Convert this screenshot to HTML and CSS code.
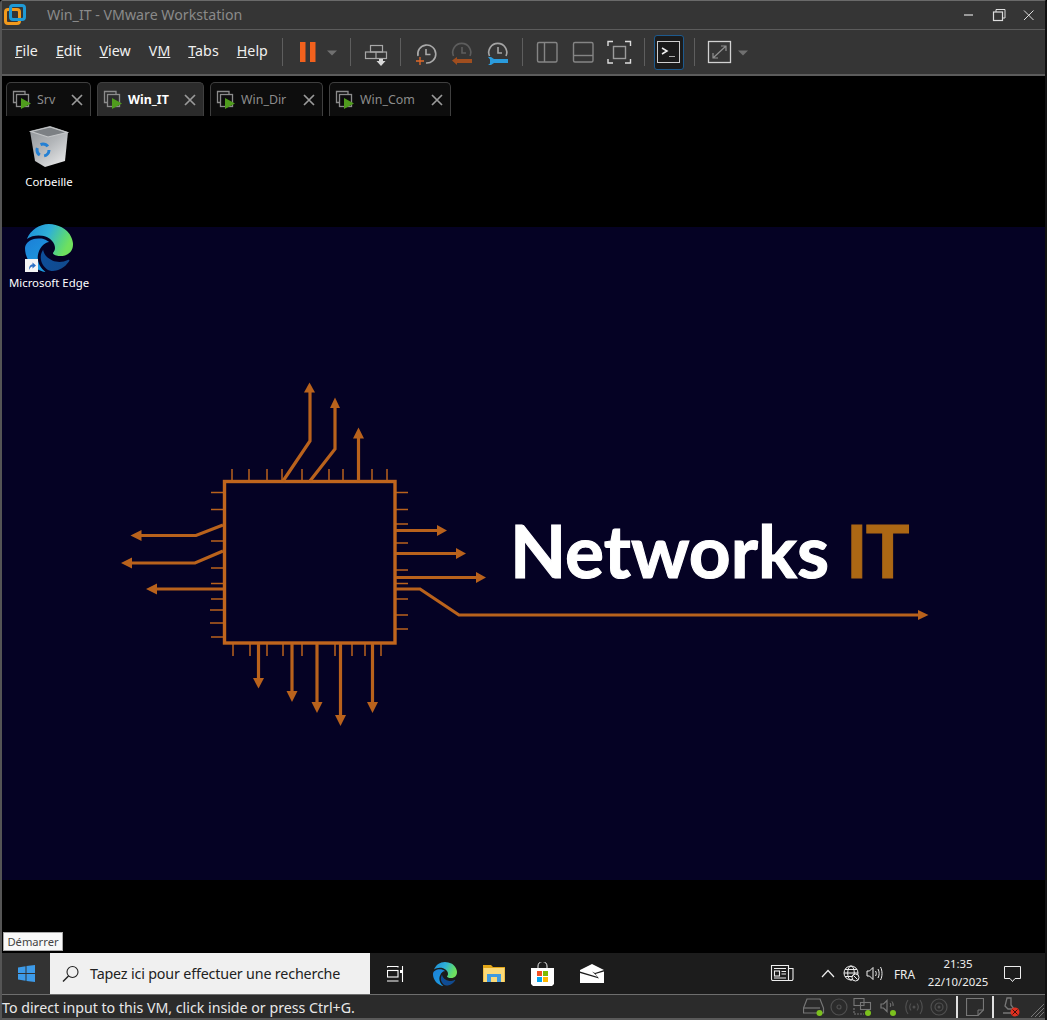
FILE: index.html
```html
<!DOCTYPE html>
<html lang="en">
<head>
<meta charset="utf-8">
<title>Win_IT - VMware Workstation</title>
<link rel="stylesheet" href="styles.css">
</head>
<body>
<svg class="defs" width="0" height="0" aria-hidden="true">
  <defs>
    <linearGradient id="edgeTop" x1="0" y1="0" x2="1" y2="0.35">
      <stop offset="0" stop-color="#1b8ad8"/><stop offset="0.5" stop-color="#2fb0d8"/><stop offset="0.85" stop-color="#58d67c"/><stop offset="1" stop-color="#6fe05e"/>
    </linearGradient>
    <linearGradient id="edgeLeft" x1="0" y1="0" x2="0.6" y2="1">
      <stop offset="0" stop-color="#1c7fd6"/><stop offset="1" stop-color="#1d9be0"/>
    </linearGradient>
    <linearGradient id="edgeBottom" x1="0" y1="0" x2="1" y2="0.5">
      <stop offset="0" stop-color="#0c4f9c"/><stop offset="1" stop-color="#114a8e"/>
    </linearGradient>
    <symbol id="edge" viewBox="0 0 24 24">
      <path fill="url(#edgeBottom)" d="M21.86 17.86q.14 0 .25.12.1.13.1.25t-.11.33l-.32.46-.43.53-.44.5q-.21.25-.38.42l-.22.23q-.58.53-1.34 1.04-.76.51-1.6.91-.86.4-1.74.64t-1.67.24q-.9 0-1.69-.28-.8-.28-1.48-.78-.68-.5-1.22-1.17-.53-.66-.92-1.44-.38-.77-.58-1.6-.2-.83-.2-1.67 0-1 .32-1.96.33-.97.87-1.8.14.95.55 1.77.41.82 1.02 1.5.6.68 1.38 1.21.78.54 1.64.9.86.36 1.77.56.92.2 1.8.2 1.12 0 2.18-.24 1.06-.23 2.06-.72l.2-.1.2-.05z"/>
      <path fill="url(#edgeLeft)" d="M6.36 16.59q0 1.1.27 2.15.27 1.06.78 2.03.51.96 1.24 1.77.74.82 1.66 1.4-1.47-.2-2.8-.74-1.33-.55-2.48-1.37-1.15-.83-2.08-1.9-.92-1.07-1.58-2.33T.36 14.94Q0 13.54 0 12.06q0-.81.32-1.49.31-.68.83-1.23.53-.55 1.2-.96.66-.4 1.35-.66.74-.27 1.5-.39.78-.12 1.55-.12.7 0 1.42.1.72.12 1.4.35.68.23 1.32.57.63.35 1.16.83-.35 0-.7.07-.33.07-.65.23v-.02q-.63.28-1.2.74-.57.46-1.05 1.04-.48.58-.87 1.26-.38.67-.65 1.39-.27.71-.42 1.44-.15.72-.15 1.38z"/>
      <path fill="url(#edgeTop)" d="M11.96.06q1.7 0 3.33.39 1.63.38 3.07 1.15 1.43.77 2.62 1.93 1.18 1.16 1.98 2.7.49.94.76 1.96.28 1 .28 2.08 0 .89-.23 1.7-.24.8-.69 1.48-.45.68-1.1 1.22-.64.53-1.45.88-.54.24-1.11.36-.58.13-1.16.13-.42 0-.97-.03-.54-.03-1.1-.12-.55-.09-1.05-.28-.5-.19-.84-.5-.12-.09-.23-.24-.1-.16-.1-.33 0-.15.16-.35.16-.2.35-.5.2-.28.36-.68.16-.4.16-.95 0-1.06-.4-1.96-.4-.91-1.06-1.64-.66-.74-1.52-1.28-.86-.55-1.79-.89-.84-.3-1.72-.44-.87-.14-1.76-.14-1.55 0-3.06.45T.94 7.55q.71-1.74 1.81-3.13 1.1-1.38 2.52-2.35Q6.68 1.1 8.37.58q1.7-.52 3.58-.52Z"/>
    </symbol>
    <symbol id="vmtab" viewBox="0 0 20 20">
      <path d="M4.5 12.5H1.5V1.5H13V4" fill="none" stroke="#8c8c8c" stroke-width="1.3"/>
      <rect x="4.5" y="4.5" width="12" height="12" fill="none" stroke="#8c8c8c" stroke-width="1.3"/>
      <path d="M9 8V19L19 13.5Z" fill="#4f9c1d"/>
    </symbol>
    <symbol id="xmark" viewBox="0 0 12 12">
      <path d="M1 1L11 11M11 1L1 11" stroke="#9a9a9a" stroke-width="1.7" fill="none"/>
    </symbol>
  </defs>
</svg>

<div class="window">
  <header class="titlebar">
    <svg class="app-logo" width="22" height="22" viewBox="0 0 22 22">
      <rect x="1.5" y="5.5" width="14" height="14" rx="2.5" fill="none" stroke="#f39a1c" stroke-width="3"/>
      <rect x="6.5" y="1.5" width="14" height="14" rx="2.5" fill="none" stroke="#1f9ad6" stroke-width="3"/>
    </svg>
    <span class="title">Win_IT - VMware Workstation</span>
    <div class="win-controls">
      <svg width="30" height="22" viewBox="0 0 30 22"><path d="M10 11H19" stroke="#ddd" stroke-width="1.2"/></svg>
      <svg width="30" height="22" viewBox="0 0 30 22"><path d="M12 8V5.500H21V14H18.500" fill="none" stroke="#ddd" stroke-width="1"/><rect x="9.500" y="8" width="9" height="8.500" fill="none" stroke="#ddd" stroke-width="1.200"/></svg>
      <svg width="30" height="22" viewBox="0 0 30 22"><path d="M10 6.500L19.500 16M19.500 6.500L10 16" stroke="#ddd" stroke-width="1"/></svg>
    </div>
  </header>

  <div class="toolbar">
    <nav class="menus">
      <span><u>F</u>ile</span><span><u>E</u>dit</span><span><u>V</u>iew</span><span>V<u>M</u></span><span><u>T</u>abs</span><span><u>H</u>elp</span>
    </nav>
    <i class="sep"></i>
    <svg class="tool" viewBox="0 0 36 36"><rect x="11" y="2" width="5.500" height="20" fill="#f2611d"/><rect x="21" y="2" width="5.500" height="20" fill="#f2611d"/></svg>
    <svg class="drop" viewBox="0 0 14 36"><path d="M2 10.500H12L7 15.500Z" fill="#707070"/></svg>
    <i class="sep sep-wide"></i>
    <svg class="tool" viewBox="0 0 36 36"><g fill="none" stroke="#a8a8a8" stroke-width="1.200"><rect x="13.500" y="5.500" width="12" height="6.500"/><rect x="8.500" y="12" width="21" height="6.500"/><path d="M19 12V18.500"/></g><path d="M22 19H26V21H28.500L24 26L19.500 21H22Z" fill="#d8d8d8"/></svg>
    <i class="sep"></i>
    <svg class="tool" viewBox="0 0 36 36"><g fill="none" stroke="#aaa" stroke-width="1.600"><path d="M11 16A9 9 0 1 1 19 23"/><path d="M19 9V14.500H23.500"/></g><path d="M13 17V25M9 21H17" stroke="#e0692a" stroke-width="1.300"/></svg>
    <svg class="tool" viewBox="0 0 36 36"><g fill="none" stroke="#5d5d5d" stroke-width="1.600"><path d="M10.500 16A9 9 0 1 1 27 16"/><path d="M19 7V13H23"/></g><path d="M9 20.500L14 17V19H29V23H14V25Z" fill="#a04e1f"/></svg>
    <svg class="tool" viewBox="0 0 36 36"><g fill="none" stroke="#a5a5a5" stroke-width="1.600"><path d="M10.500 16A9 9 0 1 1 27 16"/><path d="M19 7V13H23"/></g><path d="M9 17H12L15 19H29V23H15L12 25H9L11 23.500V19.500Z" fill="#2a9bdc"/></svg>
    <i class="sep"></i>
    <svg class="tool" viewBox="0 0 36 36"><g fill="none" stroke="#858585" stroke-width="1.400"><rect x="8.500" y="2.500" width="19.500" height="19.500" rx="1.500"/><path d="M15.500 2.500V22"/></g></svg>
    <svg class="tool" viewBox="0 0 36 36"><g fill="none" stroke="#858585" stroke-width="1.400"><rect x="8.500" y="2.500" width="19.500" height="19.500" rx="1.500"/><path d="M8.500 15.500H28"/></g></svg>
    <svg class="tool" viewBox="0 0 36 36"><path d="M7 6V1.500H12M24 1.500H29.500V6M29.500 19V23H24M12 23H7V19" fill="none" stroke="#ddd" stroke-width="1.400"/><rect x="12.500" y="6.500" width="12" height="12" fill="none" stroke="#9c9c9c" stroke-width="1.400"/></svg>
    <i class="sep"></i>
    <div class="tool-active">
      <svg width="23" height="22" viewBox="0 0 23 22"><rect x="0.500" y="0.500" width="22" height="21" fill="none" stroke="#cfcfcf"/><path d="M5 7L10 10L5 13" fill="none" stroke="#eee" stroke-width="1.500"/><path d="M12 15.500H18" stroke="#aaa"/></svg>
    </div>
    <i class="sep"></i>
    <svg class="tool" viewBox="0 0 36 36"><rect x="7.500" y="1.500" width="22" height="21" fill="none" stroke="#d2d2d2" stroke-width="1.300"/><path d="M12 18L25 6M20 6H25V11M12 13V18H17" fill="none" stroke="#8f8f8f" stroke-width="1.200"/></svg>
    <svg class="drop" viewBox="0 0 14 36"><path d="M1 10.500H11L6 15.500Z" fill="#707070"/></svg>
  </div>

  <div class="tabs">
    <div class="tab"><svg class="tab-icon"><use href="#vmtab"/></svg><span>Srv</span><svg class="tab-x"><use href="#xmark"/></svg></div>
    <div class="tab tab-on"><svg class="tab-icon"><use href="#vmtab"/></svg><span>Win_IT</span><svg class="tab-x"><use href="#xmark"/></svg></div>
    <div class="tab"><svg class="tab-icon"><use href="#vmtab"/></svg><span>Win_Dir</span><svg class="tab-x"><use href="#xmark"/></svg></div>
    <div class="tab"><svg class="tab-icon"><use href="#vmtab"/></svg><span>Win_Com</span><svg class="tab-x"><use href="#xmark"/></svg></div>
  </div>

  <main class="guest">
    <div class="wall">
      <svg class="logo" viewBox="2 227 1043 653" width="1043" height="653">
        <g class="thin">
          <path d="M232 469V481M249 469V481M267 469V481M282 469V481M302 469V481M329 469V481M343 469V481M372 469V481M387 469V481"/>
          <path d="M233 644V656M250 644V656M267 644V656M283 644V656M302 644V656M335 644V656M352 644V656M365 644V656M381 644V656"/>
          <path d="M211 492.500H224M211 509.500H224M211 541H224M211 568H224M211 583.500H224M211 599H224M210 610H224M210 623H224M211 637H224"/>
          <path d="M396 492.500H408M396 509.500H408M396 524H408M396 543H408M396 570H408M396 583.500H408M396 599H408M396 615H408M396 629H408"/>
        </g>
        <rect class="chip" x="224.500" y="481.500" width="170.500" height="161.500"/>
        <g class="trace">
          <path d="M283 481L310 441V392"/>
          <path d="M310 481L335 449V408"/>
          <path d="M358.500 481V438"/>
          <path d="M223 525L196 535.500H141"/>
          <path d="M223 551L195 563H131"/>
          <path d="M223 589H156"/>
          <path d="M396 530.500H437"/>
          <path d="M396 553.500H456"/>
          <path d="M396 577.500H476"/>
          <path d="M396 589H420L459 615H918"/>
          <path d="M258.500 644V679"/>
          <path d="M292 644V692"/>
          <path d="M317 644V703"/>
          <path d="M340.500 644V716"/>
          <path d="M372.500 644V703"/>
        </g>
        <g class="head">
          <path d="M309.500 382.500L315 392.500H304Z"/>
          <path d="M335 397.500L340 408H330Z"/>
          <path d="M358.500 427.500L364 438.500H353Z"/>
          <path d="M130.500 535.500L141.500 530V541Z"/>
          <path d="M121 563L132 557.500V568.500Z"/>
          <path d="M146 589L157 583.500V594.500Z"/>
          <path d="M447 530.500L437 525V536Z"/>
          <path d="M466 553.500L456 548V559Z"/>
          <path d="M486 577.500L476 572V583Z"/>
          <path d="M928.500 615L918 610V620Z"/>
          <path d="M258.500 688.500L253 678H264Z"/>
          <path d="M292 702L286.500 691H297.500Z"/>
          <path d="M317 713L311.500 702H322.500Z"/>
          <path d="M340.500 726L335 715H346Z"/>
          <path d="M372.500 713L367 702H378Z"/>
        </g>
        <text class="brand" x="510" y="578">Networks <tspan class="brand-it" x="846">IT</tspan></text>
      </svg>
    </div>

    <div class="desk-icon desk-bin">
      <svg width="40" height="44" viewBox="0 0 40 44">
        <defs><linearGradient id="binG" x1="0" y1="0" x2="0.7" y2="1"><stop offset="0" stop-color="#8e9296"/><stop offset="0.55" stop-color="#b4b7ba"/><stop offset="1" stop-color="#e2e3e4"/></linearGradient></defs>
        <path d="M1 7L21 2L39 8L36 37L16 43L6 37Z" fill="url(#binG)"/>
        <path d="M2 7.500L21 3L38 8.500L19 13Z" fill="#7c8084" stroke="#c4c6c8" stroke-width="1.200"/>
        <circle cx="14" cy="26" r="6" fill="none" stroke="#2480d4" stroke-width="3" stroke-dasharray="8 4.500"/>
      </svg>
      <span>Corbeille</span>
    </div>
    <div class="desk-icon desk-edge">
      <div class="edge-wrap">
        <svg width="48" height="48"><use href="#edge"/></svg>
        <svg class="shortcut" width="13" height="13" viewBox="0 0 13 13"><rect width="13" height="13" fill="#f4f4f4"/><path d="M4 11C4 7 5.500 5.500 7.500 5.500V3.500L11 6.500L7.500 9.500V7.500C6 7.500 5 9 4 11Z" fill="#2a6fc4"/></svg>
      </div>
      <span>Microsoft Edge</span>
    </div>

    <div class="tooltip">Démarrer</div>

    <div class="taskbar">
      <div class="start">
        <svg width="17" height="17" viewBox="0 0 17 17"><path d="M0 2.500L7.500 1.300V8H0ZM8.500 1.100L17 0V8H8.500ZM0 9H7.500V15.700L0 14.500ZM8.500 9H17V17L8.500 15.900Z" fill="#3d9be9"/></svg>
      </div>
      <div class="search">
        <svg width="18" height="18" viewBox="0 0 18 18"><circle cx="10.500" cy="7" r="5.500" fill="none" stroke="#222" stroke-width="1.100"/><path d="M6.500 11L1 16.500" stroke="#222" stroke-width="1.500"/></svg>
        <span>Tapez ici pour effectuer une recherche</span>
      </div>
      <div class="task-apps">
        <div class="app"><svg width="17" height="16" viewBox="0 0 17 16"><g fill="none" stroke="#fff" stroke-width="1.100"><rect x="0.500" y="4.500" width="10.500" height="6.500"/><path d="M0.500 1.500V0.500H11V1.500M0.500 14.500V15H11V14.500M15.500 0V16"/></g><rect x="13" y="4" width="3" height="3" fill="#fff"/></svg></div>
        <div class="app"><svg width="24" height="24"><use href="#edge"/></svg></div>
        <div class="app"><svg width="22" height="19" viewBox="0 0 22 19"><path d="M0 1H8L10 3H22V18H0Z" fill="#e2a516"/><rect x="0.500" y="4" width="21" height="14" fill="#fbd978"/><path d="M4 10H18V18H14V13H8V18H4Z" fill="#3e9ae0"/></svg></div>
        <div class="app"><svg width="23" height="24" viewBox="0 0 23 24"><path d="M7 7V4A4.500 4.500 0 0 1 16 4V7" fill="none" stroke="#eee" stroke-width="1"/><path d="M0 6H23V22L21 24H2L0 22Z" fill="#fff"/><rect x="6" y="9" width="5" height="5" fill="#f25022"/><rect x="12" y="9" width="5" height="5" fill="#7fba00"/><rect x="6" y="15" width="5" height="5" fill="#00a4ef"/><rect x="12" y="15" width="5" height="5" fill="#ffb900"/></svg></div>
        <div class="app"><svg width="24" height="19" viewBox="0 0 24 19"><path d="M0 6L12 0L24 6L15 9L12 7.500L18 13L0 7.500Z" fill="#fff"/><path d="M0 9L19 14.500L15.500 10L24 7.500V19H0Z" fill="#fff"/></svg></div>
      </div>
      <div class="tray">
        <svg class="tray-news" width="24" height="17" viewBox="0 0 24 17"><g fill="none" stroke="#eee" stroke-width="1.100"><path d="M1.500 0.500H18.500V15.500H3A1.500 1.500 0 0 1 1.500 14Z"/><path d="M18.500 3.500H23V14A1.500 1.500 0 0 1 21.500 15.500H18.500"/><rect x="4.500" y="6" width="5" height="5"/></g><path d="M4 3.500H16M11.500 6.500H16M11.500 9H16M4 13H16" stroke="#eee"/></svg>
        <svg class="tray-chev" width="14" height="9" viewBox="0 0 14 9"><path d="M1 8L7 1.500L13 8" fill="none" stroke="#eee" stroke-width="1.200"/></svg>
        <svg class="tray-globe" width="17" height="17" viewBox="0 0 17 17"><g fill="none" stroke="#eee"><circle cx="8" cy="8" r="7"/><ellipse cx="8" cy="8" rx="3.300" ry="7"/><path d="M1 8H15M2 4.500H14M2 11.500H14"/></g><circle cx="12.500" cy="12.500" r="3.500" fill="#1c1c1c" stroke="#eee"/><path d="M10.500 10.500L14.500 14.500" stroke="#eee"/></svg>
        <svg class="tray-vol" width="17" height="15" viewBox="0 0 17 15"><path d="M1 5H3.500L7 1.500V13.500L3.500 10H1Z" fill="none" stroke="#eee"/><path d="M9.500 5C10.500 6.500 10.500 8.500 9.500 10M12 3C13.500 5.500 13.500 9.500 12 12M14.500 1C16.500 4.500 16.500 10.500 14.500 14" fill="none" stroke="#eee"/></svg>
        <span class="tray-lang">FRA</span>
        <div class="clock"><span>21:35</span><span>22/10/2025</span></div>
        <svg class="tray-note" width="17" height="16" viewBox="0 0 17 16"><path d="M0.500 0.500H16.500V12.500H11L8.500 15.500L6 12.500H0.500Z" fill="none" stroke="#eee"/></svg>
      </div>
    </div>
  </main>

  <footer class="status">
    <span class="hint">To direct input to this VM, click inside or press Ctrl+G.</span>
    <div class="devices">
      <span class="dev"><svg width="22" height="18" viewBox="0 0 22 18"><path d="M0.500 15V10L4 1H17L20.500 10V15Z" fill="none" stroke="#777" stroke-width="1.200"/><path d="M1 10H17" stroke="#777" stroke-width="1.200"/><circle cx="16.500" cy="15" r="3" fill="#7cc11e"/></svg></span>
      <span class="dev"><svg width="18" height="18" viewBox="0 0 18 18"><g fill="none" stroke="#4f4f4f" stroke-width="1.200"><circle cx="9" cy="9" r="8"/><circle cx="9" cy="9" r="2"/></g></svg></span>
      <span class="dev"><svg width="22" height="18" viewBox="0 0 22 18"><g fill="none" stroke="#777" stroke-width="1.100"><rect x="1" y="0.500" width="10" height="7"/><rect x="7.500" y="4.500" width="10" height="7"/><path d="M1 10V16H11" stroke-dasharray="2 1"/></g><circle cx="15" cy="15" r="3" fill="#7cc11e"/></svg></span>
      <span class="dev"><svg width="18" height="18" viewBox="0 0 18 18"><path d="M1 6H3.500L7 2.500V13.500L3.500 10H1Z" fill="none" stroke="#777" stroke-width="1.200"/><path d="M10 5C11 6 11 8 10 9M12 3.500C13.200 5 13.200 7 13 8" fill="none" stroke="#777"/><circle cx="13" cy="15" r="3" fill="#7cc11e"/></svg></span>
      <span class="dev"><svg width="20" height="16" viewBox="0 0 20 16"><g fill="none" stroke="#4f4f4f" stroke-width="1.200"><path d="M4 1C1 5 1 11 4 15M16 1C19 5 19 11 16 15M7 4.500C5.500 6.500 5.500 9.500 7 11.500M13 4.500C14.500 6.500 14.500 9.500 13 11.500"/></g><circle cx="10" cy="8" r="1.500" fill="#4f4f4f"/></svg></span>
      <span class="dev"><svg width="18" height="18" viewBox="0 0 18 18"><g fill="none" stroke="#4f4f4f" stroke-width="1.200"><circle cx="9" cy="9" r="8"/><circle cx="9" cy="9" r="4"/></g><circle cx="9" cy="9" r="1.500" fill="#4f4f4f"/></svg></span>
      <i class="dev-sep"></i>
      <span class="dev dev-wide"><svg width="18" height="18" viewBox="0 0 18 18"><path d="M0.500 0.500H17.500V12L12 17.500H0.500Z" fill="none" stroke="#777" stroke-width="1.200"/><path d="M17.500 12H12V17.500" fill="none" stroke="#777"/></svg></span>
      <i class="dev-sep"></i>
      <span class="dev dev-wide"><svg width="18" height="20" viewBox="0 0 18 20"><path d="M5 1H9V8L12 12H6L3 9Z M1 16H11" fill="none" stroke="#777" stroke-width="1.300"/><circle cx="13" cy="15" r="4.500" fill="#e03020"/><path d="M10.500 12.500L15.500 17.500M15.500 12.500L10.500 17.500" stroke="#3a0d08"/></svg></span>
    </div>
    <svg class="grip" width="15" height="15" viewBox="0 0 15 15"><path d="M1 14L14 1M5 14L14 5M9 14L14 9" stroke="#777"/></svg>
  </footer>
</div>
</body>
</html>
```

FILE: styles.css
```css
* { box-sizing: border-box; }
html, body { margin: 0; padding: 0; background: #000; }
body { font-family: "Noto Sans", "Open Sans", sans-serif; overflow: hidden; }
.defs { position: absolute; }
svg { display: block; flex: none; }

.window {
  width: 1047px;
  height: 1020px;
  display: flex;
  flex-direction: column;
  background: #353535;
  border-top: 1px solid #6a6a6a;
  border-left: 2px solid #555;
  border-right: 2px solid #111;
  border-radius: 3px 3px 0 0;
}

/* title bar */
.titlebar {
  height: 29px;
  flex: none;
  display: flex;
  align-items: center;
  background: #353535;
  border-bottom: 1px solid #5c5c5c;
  padding-left: 2px;
}
.app-logo { margin-top: -1px; }
.title { margin-left: 21px; font-size: 14.2px; color: #8a8a8a; margin-top: -1px; }
.win-controls { margin-left: auto; display: flex; gap: 0; padding-right: 1px; }

/* toolbar */
.toolbar {
  height: 46px;
  flex: none;
  display: flex;
  align-items: center;
  background: #353535;
  border-bottom: 2px solid #5c5c5c;
}
.menus {
  display: flex;
  gap: 18px;
  margin-left: 13px;
  margin-bottom: 4px;
  font-size: 14.2px;
  color: #f0f0f0;
  letter-spacing: 0.05px;
}
.sep { width: 1px; height: 28px; background: #5e5e5e; margin: 0 6px 0 7px; flex: none; }
.menus + .sep { margin-left: 14px; }
.sep-wide { margin-left: 11px; }
.tool { width: 36px; height: 36px; flex: none; margin-top: 12px; }
.drop { width: 14px; height: 36px; flex: none; margin-top: 12px; }
.tool-active {
  width: 30px;
  height: 35px;
  margin: 0 3px;
  display: flex;
  align-items: center;
  justify-content: center;
  background: #1b1b1b;
  border: 1px solid #1d5a8e;
  border-radius: 3px;
}

/* tabs */
.tabs {
  height: 40px;
  flex: none;
  display: grid;
  grid-template-columns: 85px 107px 113px 122px;
  gap: 6px;
  padding: 6px 0 0 4px;
  background: #000;
}
.tab {
  display: flex;
  align-items: center;
  padding: 0 7px;
  border: 1px solid #3f3f3f;
  border-bottom: 0;
  border-radius: 5px 5px 0 0;
  background: #0d0d0d;
  font-size: 12.4px;
  color: #8c8c8c;
}
.tab-on { background: #2b2b2b; color: #fff; font-weight: 700; }
.tab-icon { width: 20px; height: 20px; margin-left: -2px; margin-right: 5px; }
.tab-x { width: 12px; height: 12px; margin-left: auto; }

/* guest desktop */
.guest {
  position: relative;
  flex: 1;
  display: flex;
  flex-direction: column;
  background: #000;
  padding-top: 111px;
  min-height: 0;
}
.wall { height: 653px; flex: none; background: #050224; }
.logo { display: block; }
.thin { fill: none; stroke: #b9621c; stroke-width: 1.500; }
.chip { fill: none; stroke: #c0651d; stroke-width: 3.400; }
.trace { fill: none; stroke: #b9621c; stroke-width: 3.200; }
.head { fill: #b9621c; }
.brand {
  font-family: "Lato", sans-serif;
  font-weight: 700;
  font-size: 73px;
  fill: #fff;
  stroke: #fff;
  stroke-width: 1.100px;
}
.brand-it { fill: #ac6714; stroke: #ac6714; letter-spacing: -2px; }

.desk-icon {
  position: absolute;
  display: flex;
  flex-direction: column;
  align-items: center;
  width: 90px;
  color: #fff;
  font-size: 11.400px;
  line-height: 15px;
}
.desk-bin { left: 2px; top: 8px; gap: 6px; }
.desk-edge { left: 2px; top: 108px; gap: 3px; }
.edge-wrap { position: relative; width: 48px; height: 48px; }
.shortcut { position: absolute; left: 0; bottom: 0; }

.tooltip {
  position: absolute;
  left: 1px;
  top: 816px;
  width: 60px;
  height: 19px;
  background: #f8f8f8;
  border: 1px solid #aaa;
  color: #444;
  font-size: 11.200px;
  line-height: 17px;
  text-align: center;
}

/* guest taskbar */
.taskbar {
  margin-top: auto;
  height: 41px;
  flex: none;
  display: flex;
  align-items: stretch;
  background: #1c1c1c;
  color: #eee;
}
.start {
  width: 48px;
  flex: none;
  display: flex;
  align-items: center;
  justify-content: center;
  background: #333;
}
.search {
  width: 320px;
  flex: none;
  display: flex;
  align-items: center;
  gap: 10px;
  padding-left: 12px;
  background: #f0f0f0;
  color: #222;
  font-size: 14.300px;
  letter-spacing: -0.17px;
}
.task-apps { display: flex; margin-left: 1px; }
.app { width: 49px; display: flex; align-items: center; justify-content: center; }
.tray { margin-left: auto; display: flex; align-items: center; position: relative; }
.tray-news { margin-right: 27px; }
.tray-chev { margin-right: 8px; }
.tray-globe { margin-right: 6px; }
.tray-vol { margin-right: 11px; }
.tray-lang { font-size: 11.800px; width: 24px; }
.clock {
  width: 80px;
  display: flex;
  flex-direction: column;
  align-items: center;
  font-size: 11.400px;
  line-height: 18px;
  margin-top: -2px;
}
.tray-note { margin-left: 6px; margin-right: 24px; }

/* vm status bar */
.status {
  height: 26px;
  flex: none;
  display: flex;
  align-items: center;
  background: #2b2b2b;
  border-top: 1px solid #6e6e6e;
  border-bottom: 2px solid #5a5a5a;
  position: relative;
}
.hint { font-size: 14.200px; color: #e8e8e8; padding-top: 2px; }
.devices {
  margin-left: auto;
  margin-right: 17px;
  display: flex;
  align-items: center;
}
.dev { width: 25px; display: flex; justify-content: center; }
.dev-wide { width: 34px; }
.dev-sep { width: 2px; height: 22px; background: #e0e0e0; margin-left: 5px; }
.dev-wide + .dev-sep { margin-left: 0; }
.grip { position: absolute; right: 0; bottom: 0; }
```
